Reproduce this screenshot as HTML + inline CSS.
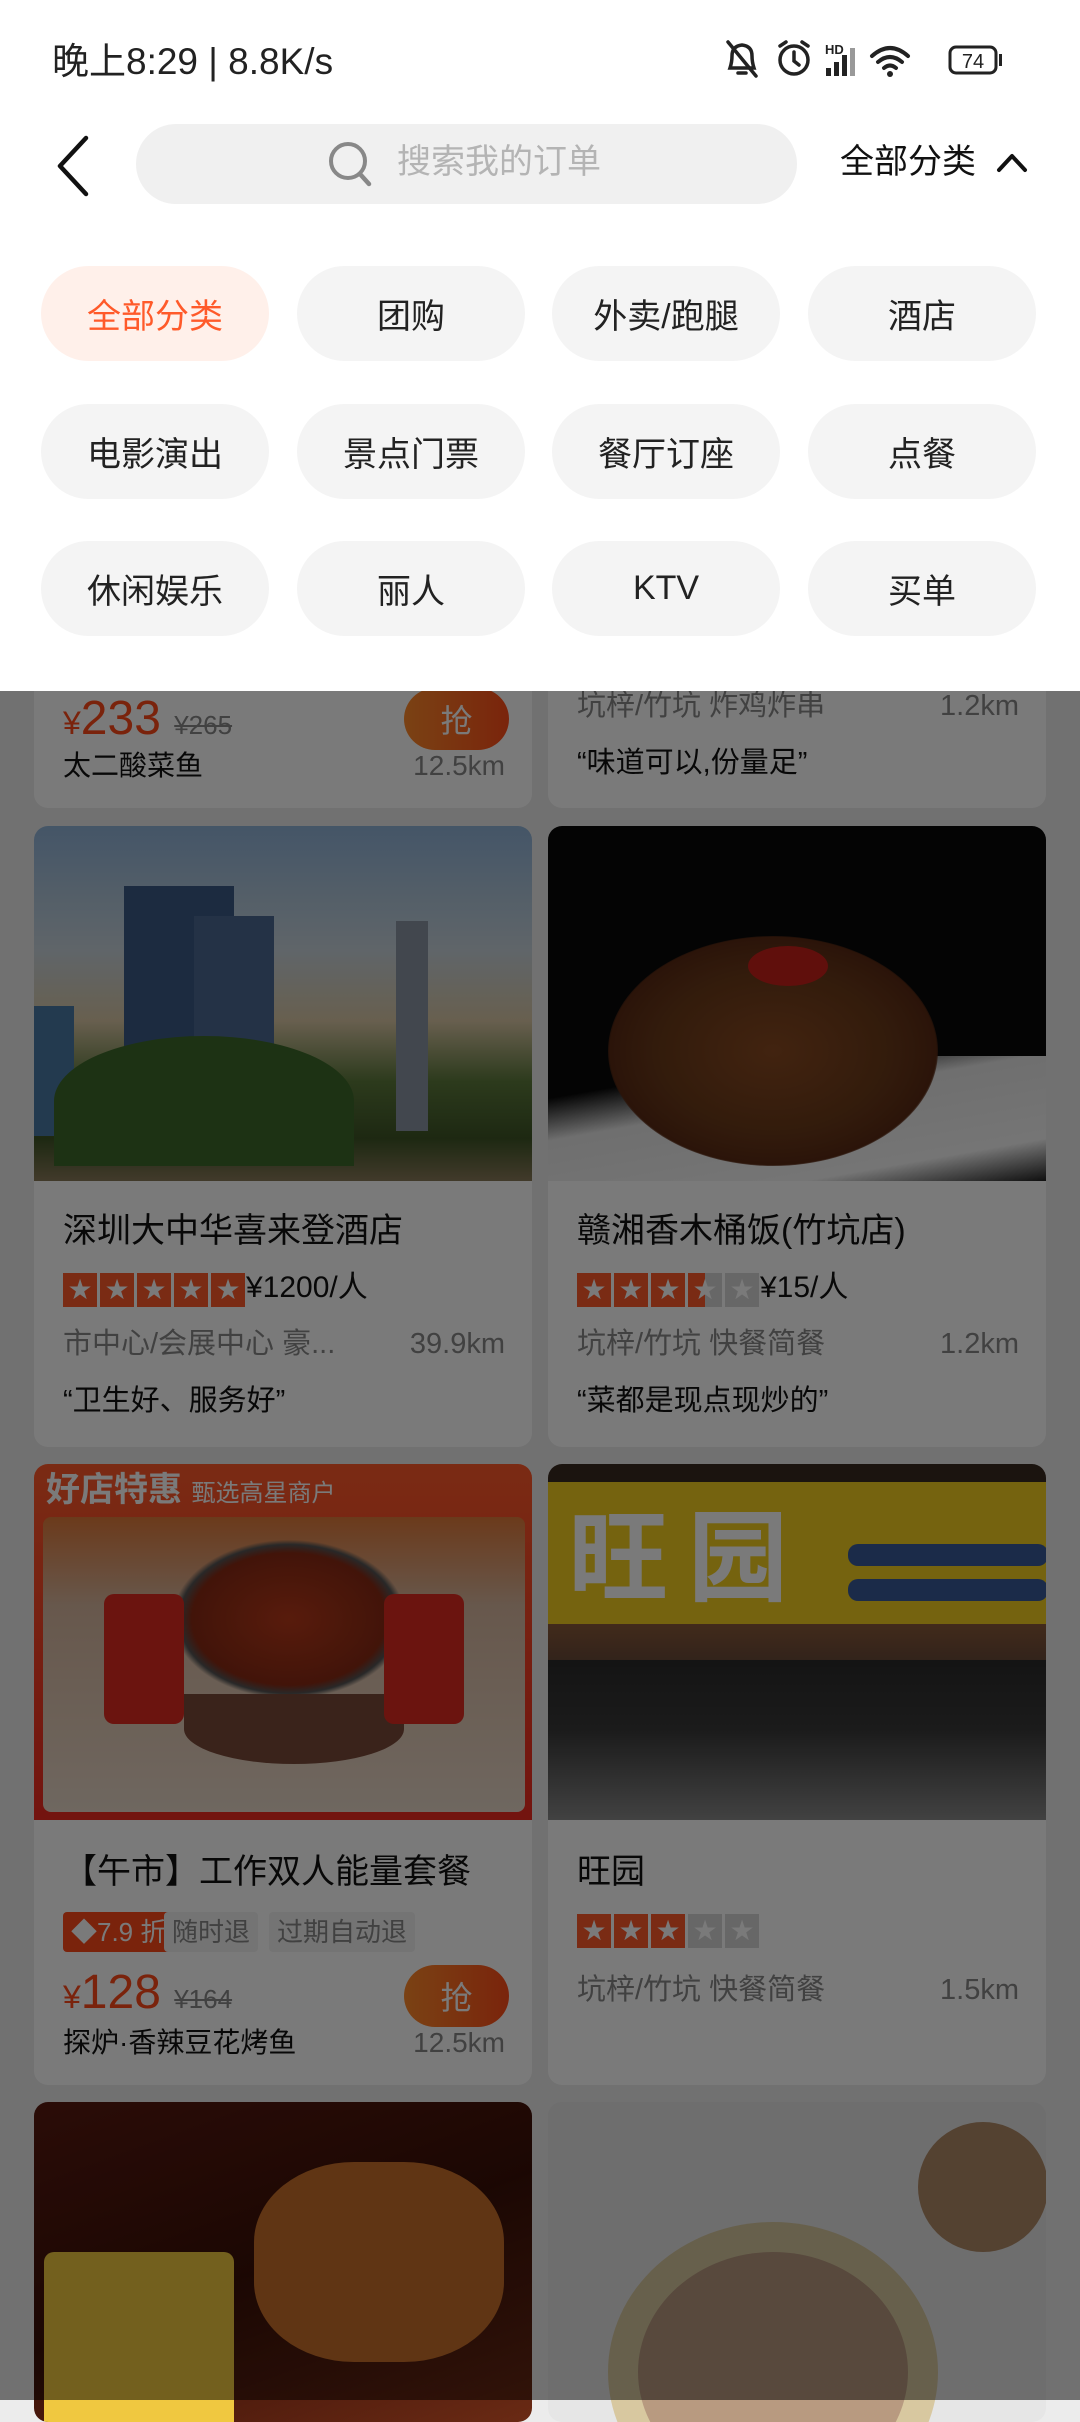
<!DOCTYPE html>
<html><head><meta charset="utf-8"><style>
*{margin:0;padding:0;box-sizing:border-box}
body{width:1080px;height:2400px;overflow:hidden;background:#ececec;font-family:"Liberation Sans","Noto Sans CJK SC",sans-serif;position:relative;color:#111}
.a{position:absolute}
.card{position:absolute;background:#fff;border-radius:14px;overflow:hidden}
.chip{position:absolute;width:228px;height:95px;border-radius:48px;background:#f4f4f4;font-size:34px;display:flex;align-items:center;justify-content:center;color:#222}
.t{position:absolute;white-space:nowrap;line-height:1.3}
.stars{position:absolute;display:flex;gap:3px}
.stars i{display:block;width:34px;height:34px;background:#ff5a2a;position:relative}
.stars i.g{background:#d8d8d8}
.stars i.h{background:linear-gradient(90deg,#ff5a2a 50%,#d8d8d8 50%)}
.stars i:after{content:"★";position:absolute;left:0;top:0;width:34px;line-height:34px;text-align:center;color:#fff;font-size:28px;font-family:"DejaVu Sans",sans-serif}
.btn{position:absolute;width:105px;height:62px;border-radius:31px;background:linear-gradient(90deg,#ff8a2a,#ff4d1a);color:#fff;font-size:32px;display:flex;align-items:center;justify-content:center}
.gray{color:#888}
.tag{position:absolute;height:40px;padding:0 8px;font-size:26px;line-height:40px;white-space:nowrap;border-radius:4px}
</style></head><body>

<div class="card" style="left:34px;top:600px;width:498px;height:208px">
  <div class="t" style="left:29px;top:88px;color:#ff4a1a;font-size:48px"><span style="font-size:32px">¥</span>233 <span style="font-size:26px;color:#888;text-decoration:line-through">¥265</span></div>
  <div class="btn" style="left:370px;top:88px">抢</div>
  <div class="t" style="left:29px;top:148px;font-size:28px">太二酸菜鱼</div>
  <div class="t gray" style="right:27px;top:148px;font-size:28px">12.5km</div>
</div>
<div class="card" style="left:548px;top:600px;width:498px;height:208px">
  <div class="t gray" style="left:29px;top:88px;font-size:29px">坑梓/竹坑 炸鸡炸串</div>
  <div class="t gray" style="right:27px;top:88px;font-size:29px">1.2km</div>
  <div class="t" style="left:29px;top:145px;font-size:29px">“味道可以,份量足”</div>
</div>

<div class="card" style="left:34px;top:826px;width:498px;height:621px">
  <div class="a" style="left:0;top:0;width:498px;height:355px;background:linear-gradient(180deg,#8fb3d8 0%,#c8d4dc 35%,#d9c7a5 55%,#5d7a3c 72%,#3e5526 88%,#8a7a5a 100%)"></div>
  <div class="a" style="left:90px;top:60px;width:110px;height:230px;background:#3b5b86"></div>
  <div class="a" style="left:160px;top:90px;width:80px;height:200px;background:#4c6a93"></div>
  <div class="a" style="left:362px;top:95px;width:32px;height:210px;background:#8a95a4"></div>
  <div class="a" style="left:0;top:180px;width:40px;height:130px;background:#4a7aa5"></div>
  <div class="a" style="left:20px;top:210px;width:300px;height:130px;border-radius:50% 50% 0 0;background:#3e6a2a"></div>
  <div class="t" style="left:29px;top:383px;font-size:34px">深圳大中华喜来登酒店</div>
  <div class="stars" style="left:29px;top:447px"><i></i><i></i><i></i><i></i><i></i></div>
  <div class="t" style="left:212px;top:442px;font-size:30px">¥1200/人</div>
  <div class="t gray" style="left:29px;top:500px;font-size:29px">市中心/会展中心 豪...</div>
  <div class="t gray" style="right:27px;top:500px;font-size:29px">39.9km</div>
  <div class="t" style="left:29px;top:557px;font-size:29px">“卫生好、服务好”</div>
</div>
<div class="card" style="left:548px;top:826px;width:498px;height:621px">
  <div class="a" style="left:0;top:0;width:498px;height:355px;background:#0a0a0a"></div>
  <div class="a" style="left:0;top:230px;width:498px;height:125px;background:linear-gradient(170deg,#0a0a0a 20%,#e8e8e8 40%,#f5f5f5 80%,#222 100%)"></div>
  <div class="a" style="left:60px;top:110px;width:330px;height:230px;border-radius:50%;background:radial-gradient(ellipse,#8a4a22 0%,#6a3a1a 50%,#5a2a14 70%,rgba(0,0,0,0) 72%)"></div>
  <div class="a" style="left:200px;top:120px;width:80px;height:40px;border-radius:50%;background:#c8201a"></div>
  <div class="t" style="left:29px;top:383px;font-size:34px">赣湘香木桶饭(竹坑店)</div>
  <div class="stars" style="left:29px;top:447px"><i></i><i></i><i></i><i class="h"></i><i class="g"></i></div>
  <div class="t" style="left:212px;top:442px;font-size:30px">¥15/人</div>
  <div class="t gray" style="left:29px;top:500px;font-size:29px">坑梓/竹坑 快餐简餐</div>
  <div class="t gray" style="right:27px;top:500px;font-size:29px">1.2km</div>
  <div class="t" style="left:29px;top:557px;font-size:29px">“菜都是现点现炒的”</div>
</div>

<div class="card" style="left:34px;top:1464px;width:498px;height:621px">
  <div class="a" style="left:0;top:0;width:498px;height:356px;background:linear-gradient(180deg,#ff5a2a,#f02a20)"></div>
  <div class="t" style="left:12px;top:4px;font-size:34px;font-weight:bold;color:#fff">好店特惠 <span style="font-size:24px;font-weight:normal">甄选高星商户</span></div>
  <div class="a" style="left:9px;top:53px;width:482px;height:295px;border-radius:8px;background:linear-gradient(180deg,#e07a3a 0%,#d8b8a0 30%,#e8d8c8 100%)"></div>
  <div class="a" style="left:130px;top:70px;width:250px;height:170px;border-radius:50%;background:radial-gradient(ellipse,#b83a1a 0%,#8a2a14 55%,#555 62%,rgba(0,0,0,0) 66%)"></div>
  <div class="a" style="left:150px;top:230px;width:220px;height:70px;border-radius:0 0 50% 50%;background:#7a4a3a"></div>
  <div class="a" style="left:70px;top:130px;width:80px;height:130px;background:#e02a20;border-radius:10px"></div>
  <div class="a" style="left:350px;top:130px;width:80px;height:130px;background:#e02a20;border-radius:10px"></div>
  <div class="t" style="left:29px;top:386px;font-size:34px">【午市】工作双人能量套餐</div>
  <div class="tag" style="left:29px;top:448px;background:#ff4a1a;color:#fff">◆7.9 折</div>
  <div class="tag gray" style="left:130px;top:448px;background:#f2f2f2">随时退</div>
  <div class="tag gray" style="left:235px;top:448px;background:#f2f2f2">过期自动退</div>
  <div class="t" style="left:29px;top:498px;color:#ff4a1a;font-size:48px"><span style="font-size:32px">¥</span>128 <span style="font-size:26px;color:#888;text-decoration:line-through">¥164</span></div>
  <div class="btn" style="left:370px;top:501px">抢</div>
  <div class="t" style="left:29px;top:561px;font-size:28px">探炉·香辣豆花烤鱼</div>
  <div class="t gray" style="right:27px;top:561px;font-size:28px">12.5km</div>
</div>
<div class="card" style="left:548px;top:1464px;width:498px;height:621px">
  <div class="a" style="left:0;top:0;width:498px;height:356px;background:linear-gradient(180deg,#3a2a20 0%,#3a2a20 5%,#f5d020 5%,#f5d020 45%,#8a5a3a 45%,#6a4a3a 55%,#2a2a2a 55%,#3a3a3a 75%,#8a8a8a 100%)"></div>
  <div class="t" style="left:20px;top:30px;font-size:100px;font-weight:bold;color:#fff;letter-spacing:20px">旺园</div>
  <div class="a" style="left:300px;top:80px;width:200px;height:22px;background:#3a5a9a;border-radius:10px"></div>
  <div class="a" style="left:300px;top:115px;width:200px;height:22px;background:#3a5a9a;border-radius:10px"></div>
  <div class="t" style="left:29px;top:386px;font-size:34px">旺园</div>
  <div class="stars" style="left:29px;top:450px"><i></i><i></i><i></i><i class="g"></i><i class="g"></i></div>
  <div class="t gray" style="left:29px;top:508px;font-size:29px">坑梓/竹坑 快餐简餐</div>
  <div class="t gray" style="right:27px;top:508px;font-size:29px">1.5km</div>
</div>

<div class="card" style="left:34px;top:2102px;width:498px;height:320px;background:linear-gradient(160deg,#5a1a10,#3a1008 50%,#6a2a14)">
  <div class="a" style="left:220px;top:60px;width:250px;height:200px;border-radius:40%;background:#c8702a"></div>
  <div class="a" style="left:10px;top:150px;width:190px;height:200px;background:#f0c840;border-radius:10px"></div>
</div>
<div class="card" style="left:548px;top:2102px;width:498px;height:320px;background:#e6e6e6">
  <div class="a" style="left:60px;top:120px;width:330px;height:300px;border-radius:50%;background:#d8c8a0"></div>
  <div class="a" style="left:90px;top:150px;width:270px;height:240px;border-radius:50%;background:#b89a80"></div>
  <div class="a" style="left:370px;top:20px;width:130px;height:130px;border-radius:50%;background:#b08a68"></div>
</div>

<div class="a" style="left:0;top:691px;width:1080px;height:1709px;background:rgba(0,0,0,0.52)"></div>

<div class="a" style="left:0;top:0;width:1080px;height:691px;background:#fff">
  <div class="t" style="left:52px;top:38px;font-size:37px;color:#222">晚上8:29 | 8.8K/s</div>
  <svg class="a" style="left:722px;top:38px" width="300" height="46" viewBox="0 0 300 46">
    <g fill="none" stroke="#222" stroke-width="3.5" stroke-linecap="round">
      <path d="M8 30 Q10 24 10 18 Q10 8 20 7 Q30 8 30 18 Q30 24 32 30 Z"/><path d="M16 35 h8"/><path d="M6 4 L34 38"/>
      <circle cx="72" cy="22" r="14"/><path d="M72 14 v9 l5 4"/><path d="M58 8 l6 -4 M86 8 l-6 -4"/>
    </g>
    <text x="103" y="16" font-size="13" font-weight="bold" fill="#222" font-family="Liberation Sans">HD</text>
    <g fill="#222"><rect x="104" y="30" width="5" height="8"/><rect x="112" y="24" width="5" height="14"/><rect x="120" y="17" width="5" height="21"/><rect x="128" y="10" width="5" height="28" fill="#999"/></g>
    <g fill="none" stroke="#222" stroke-width="4" stroke-linecap="round"><path d="M150 18 Q168 2 186 18"/><path d="M156 24 Q168 14 180 24"/><path d="M162 30 Q168 25 174 30"/></g>
    <circle cx="168" cy="36" r="3" fill="#222"/>
    <rect x="228" y="9" width="46" height="26" rx="6" fill="none" stroke="#222" stroke-width="3"/>
    <rect x="277" y="16" width="3" height="12" fill="#222"/>
    <text x="251" y="30" font-size="20" fill="#222" text-anchor="middle" font-family="Liberation Sans">74</text>
  </svg>
  <svg class="a" style="left:50px;top:134px" width="44" height="64" viewBox="0 0 44 64"><path d="M36 4 L10 32 L36 60" fill="none" stroke="#111" stroke-width="4.5" stroke-linecap="round" stroke-linejoin="round"/></svg>
  <div class="a" style="left:136px;top:124px;width:661px;height:80px;border-radius:40px;background:#f0f0f0"></div>
  <svg class="a" style="left:327px;top:140px" width="48" height="50" viewBox="0 0 48 50"><circle cx="21" cy="21" r="17" fill="none" stroke="#888" stroke-width="4"/><path d="M33 34 L42 44" stroke="#888" stroke-width="4.5" stroke-linecap="round"/></svg>
  <div class="t" style="left:397px;top:140px;font-size:34px;color:#b4b4b4">搜索我的订单</div>
  <div class="t" style="left:840px;top:140px;font-size:34px;color:#111">全部分类</div>
  <svg class="a" style="left:995px;top:150px" width="34" height="26" viewBox="0 0 34 26"><path d="M4 20 L17 6 L30 20" fill="none" stroke="#111" stroke-width="4" stroke-linecap="round" stroke-linejoin="round"/></svg>

  <div class="chip" style="left:41px;top:266px;background:#fff0ea;color:#ff5a2a">全部分类</div>
  <div class="chip" style="left:297px;top:266px">团购</div>
  <div class="chip" style="left:552px;top:266px">外卖/跑腿</div>
  <div class="chip" style="left:808px;top:266px">酒店</div>
  <div class="chip" style="left:41px;top:404px">电影演出</div>
  <div class="chip" style="left:297px;top:404px">景点门票</div>
  <div class="chip" style="left:552px;top:404px">餐厅订座</div>
  <div class="chip" style="left:808px;top:404px">点餐</div>
  <div class="chip" style="left:41px;top:541px">休闲娱乐</div>
  <div class="chip" style="left:297px;top:541px">丽人</div>
  <div class="chip" style="left:552px;top:541px">KTV</div>
  <div class="chip" style="left:808px;top:541px">买单</div>
</div>
</body></html>
